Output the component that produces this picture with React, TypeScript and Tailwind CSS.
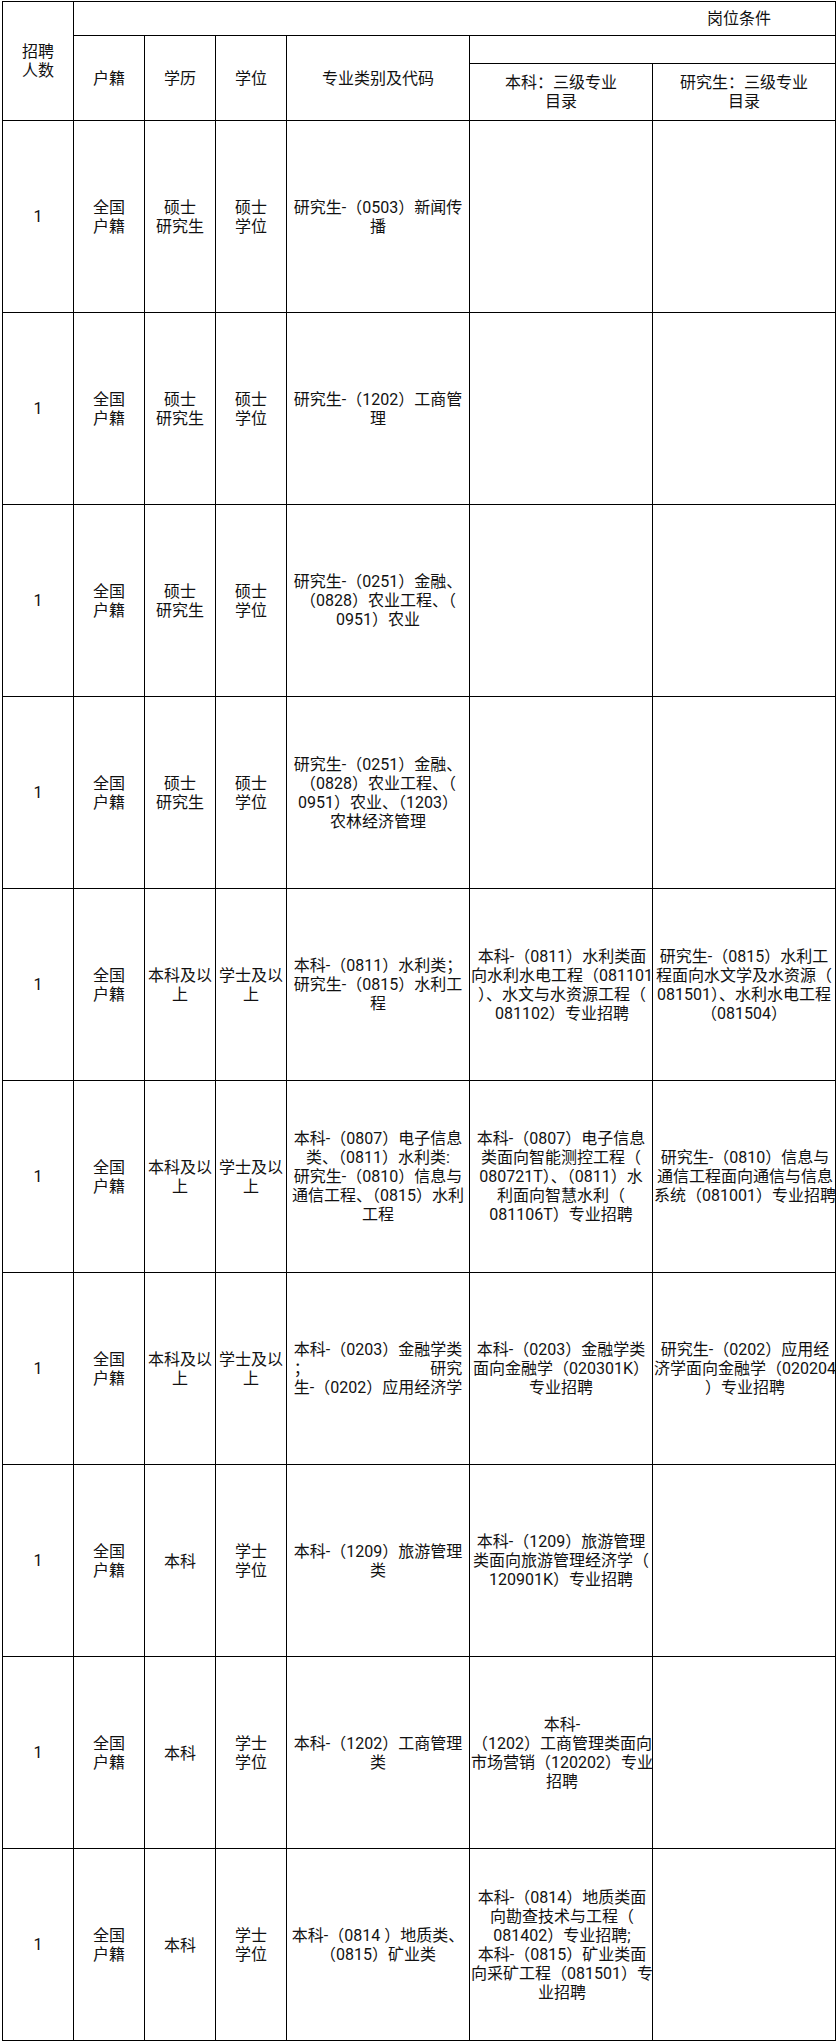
import React from "react";

type Row = {
  edu: string[];
  deg: string[];
  major: (string | [string, string])[];
  bk: string[];
  yjs: string[];
};

const rows: Row[] = [
  {
    edu: ["硕士", "研究生"],
    deg: ["硕士", "学位"],
    major: ["研究生-（0503）新闻传", "播"],
    bk: [],
    yjs: [],
  },
  {
    edu: ["硕士", "研究生"],
    deg: ["硕士", "学位"],
    major: ["研究生-（1202）工商管", "理"],
    bk: [],
    yjs: [],
  },
  {
    edu: ["硕士", "研究生"],
    deg: ["硕士", "学位"],
    major: ["研究生-（0251）金融、", "（0828）农业工程、（", "0951）农业"],
    bk: [],
    yjs: [],
  },
  {
    edu: ["硕士", "研究生"],
    deg: ["硕士", "学位"],
    major: [
      "研究生-（0251）金融、",
      "（0828）农业工程、（",
      "0951）农业、（1203）",
      "农林经济管理",
    ],
    bk: [],
    yjs: [],
  },
  {
    edu: ["本科及以", "上"],
    deg: ["学士及以", "上"],
    major: ["本科-（0811）水利类；", "研究生-（0815）水利工", "程"],
    bk: [
      "本科-（0811）水利类面",
      "向水利水电工程（081101",
      "）、水文与水资源工程（",
      "081102）专业招聘",
    ],
    yjs: [
      "研究生-（0815）水利工",
      "程面向水文学及水资源（",
      "081501）、水利水电工程",
      "（081504）",
    ],
  },
  {
    edu: ["本科及以", "上"],
    deg: ["学士及以", "上"],
    major: [
      "本科-（0807）电子信息",
      "类、（0811）水利类:",
      "研究生-（0810）信息与",
      "通信工程、（0815）水利",
      "工程",
    ],
    bk: [
      "本科-（0807）电子信息",
      "类面向智能测控工程（",
      "080721T）、（0811）水",
      "利面向智慧水利（",
      "081106T）专业招聘",
    ],
    yjs: [
      "研究生-（0810）信息与",
      "通信工程面向通信与信息",
      "系统（081001）专业招聘",
    ],
  },
  {
    edu: ["本科及以", "上"],
    deg: ["学士及以", "上"],
    major: ["本科-（0203）金融学类", ["；", "研究"], "生-（0202）应用经济学"],
    bk: ["本科-（0203）金融学类", "面向金融学（020301K）", "专业招聘"],
    yjs: ["研究生-（0202）应用经", "济学面向金融学（020204", "）专业招聘"],
  },
  {
    edu: ["本科"],
    deg: ["学士", "学位"],
    major: ["本科-（1209）旅游管理", "类"],
    bk: ["本科-（1209）旅游管理", "类面向旅游管理经济学（", "120901K）专业招聘"],
    yjs: [],
  },
  {
    edu: ["本科"],
    deg: ["学士", "学位"],
    major: ["本科-（1202）工商管理", "类"],
    bk: ["本科-", "（1202）工商管理类面向", "市场营销（120202）专业", "招聘"],
    yjs: [],
  },
  {
    edu: ["本科"],
    deg: ["学士", "学位"],
    major: ["本科-（0814 ）地质类、", "（0815）矿业类"],
    bk: [
      "本科-（0814）地质类面",
      "向勘查技术与工程（",
      "081402）专业招聘;",
      "本科-（0815）矿业类面",
      "向采矿工程（081501）专",
      "业招聘",
    ],
    yjs: [],
  },
];

function Lines({ lines }: { lines: (string | [string, string])[] }) {
  if (lines.length === 0) return null;
  return (
    <div className="inline-block align-middle">
      {lines.map((l, i) =>
        typeof l === "string" ? (
          <div key={i} className="whitespace-nowrap text-center">
            {l}
          </div>
        ) : (
          <div key={i} className="flex justify-between whitespace-nowrap">
            <span>{l[0]}</span>
            <span>{l[1]}</span>
          </div>
        )
      )}
    </div>
  );
}

const cell = "border border-black text-center align-middle px-[1px] py-0 overflow-visible";

export default function App() {
  return (
    <div className="min-h-[2044px] w-[837px] bg-white pt-[1px] pl-[2px] font-[Roboto,'Noto_Sans_CJK_SC',sans-serif] text-[16px] leading-[19px] text-[#111]">
      <table className="table-fixed border-collapse w-[833px]">
        <colgroup>
          <col className="w-[71px]" />
          <col className="w-[71px]" />
          <col className="w-[71px]" />
          <col className="w-[71px]" />
          <col className="w-[183px]" />
          <col className="w-[183px]" />
          <col className="w-[183px]" />
        </colgroup>
        <thead>
          <tr className="h-[34px]">
            <td rowSpan={3} className={cell}>
              <Lines lines={["招聘", "人数"]} />
            </td>
            <td colSpan={6} className="border border-black align-middle text-right pr-[64px]">
              岗位条件
            </td>
          </tr>
          <tr className="h-[28px]">
            <td rowSpan={2} className={cell}>户籍</td>
            <td rowSpan={2} className={cell}>学历</td>
            <td rowSpan={2} className={cell}>学位</td>
            <td rowSpan={2} className={cell}>专业类别及代码</td>
            <td colSpan={2} className={cell}></td>
          </tr>
          <tr className="h-[57px]">
            <td className={cell}>
              <Lines lines={["本科：三级专业", "目录"]} />
            </td>
            <td className={cell}>
              <Lines lines={["研究生：三级专业", "目录"]} />
            </td>
          </tr>
        </thead>
        <tbody>
          {rows.map((r, i) => (
            <tr key={i} className="h-[192px]">
              <td className={cell}>1</td>
              <td className={cell}>
                <Lines lines={["全国", "户籍"]} />
              </td>
              <td className={cell}>
                <Lines lines={r.edu} />
              </td>
              <td className={cell}>
                <Lines lines={r.deg} />
              </td>
              <td className={cell}>
                <Lines lines={r.major} />
              </td>
              <td className={cell}>
                <Lines lines={r.bk} />
              </td>
              <td className={cell}>
                <Lines lines={r.yjs} />
              </td>
            </tr>
          ))}
        </tbody>
      </table>
    </div>
  );
}
